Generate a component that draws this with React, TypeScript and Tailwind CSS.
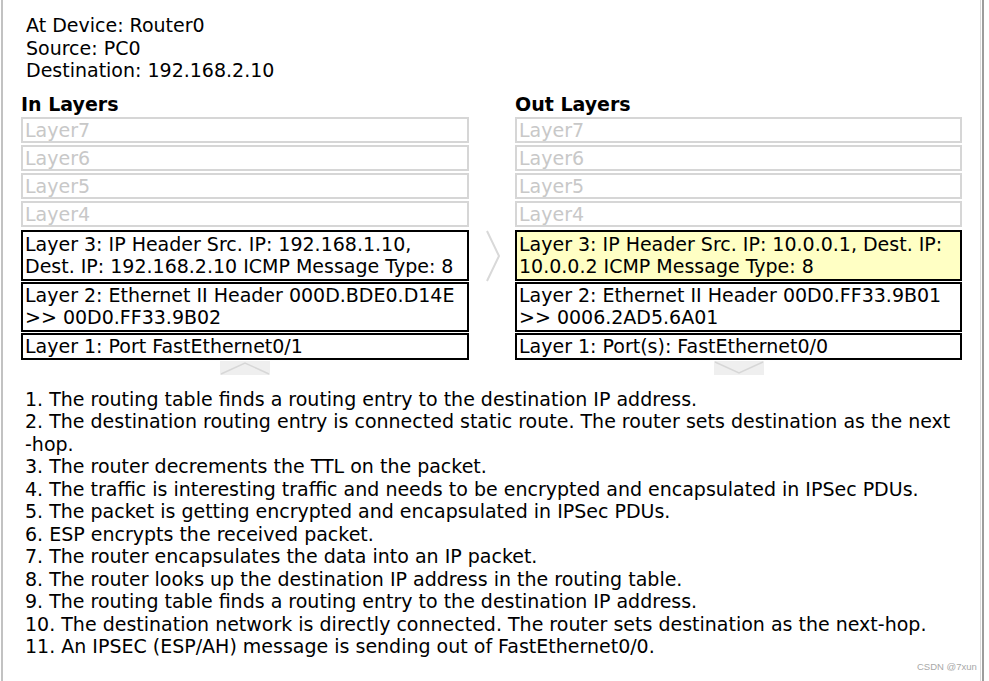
import React from 'react';

type Layer = { label: string };

const upperLayers: Layer[] = [
  { label: 'Layer7' },
  { label: 'Layer6' },
  { label: 'Layer5' },
  { label: 'Layer4' },
];

// each entry is one rendered line, the wrap of item 2 is kept as in the window
const steps = [
  '1. The routing table finds a routing entry to the destination IP address.',
  '2. The destination routing entry is connected static route. The router sets destination as the next',
  '-hop.',
  '3. The router decrements the TTL on the packet.',
  '4. The traffic is interesting traffic and needs to be encrypted and encapsulated in IPSec PDUs.',
  '5. The packet is getting encrypted and encapsulated in IPSec PDUs.',
  '6. ESP encrypts the received packet.',
  '7. The router encapsulates the data into an IP packet.',
  '8. The router looks up the destination IP address in the routing table.',
  '9. The routing table finds a routing entry to the destination IP address.',
  '10. The destination network is directly connected. The router sets destination as the next-hop.',
  '11. An IPSEC (ESP/AH) message is sending out of FastEthernet0/0.',
];

const GreyLayers = () => (
  <div className="mt-[2px] flex flex-col gap-[2px]">
    {upperLayers.map((l) => (
      <div
        key={l.label}
        className="h-[26px] border-2 border-[#d6d6d6] pl-[2px] leading-[22px] text-[#c8c8c8]"
      >
        {l.label}
      </div>
    ))}
  </div>
);

const TabUp = () => (
  <div className="mt-px h-[14px] w-[50px] self-center bg-[#efefef]">
    <svg width="50" height="14" viewBox="0 0 50 14">
      <polyline points="1,13 25,2 49,13" fill="none" stroke="#d7d7d7" strokeWidth="1.5" />
    </svg>
  </div>
);

const TabDown = () => (
  <div className="mt-px h-[14px] w-[50px] self-center bg-[#efefef]">
    <svg width="50" height="14" viewBox="0 0 50 14">
      <polyline points="1,1 25,12 49,1" fill="none" stroke="#d7d7d7" strokeWidth="1.5" />
    </svg>
  </div>
);

export default function App() {
  return (
    <div className="relative h-[681px] w-[989px] overflow-hidden bg-white font-['DejaVu_Sans',Verdana,sans-serif] text-[19px] text-black">
      <div className="ml-px h-full w-[983px] border-l-2 border-r-2 border-l-[#c2c2c2] border-r-[#9c9c9c]">
        <div className="mr-px h-full border-r border-[#d9d9d9] pl-[18px] pt-[14px]">
          {/* device info */}
          <div className="pl-[5px] leading-[22.5px]">
            <div>At Device: Router0</div>
            <div>Source: PC0</div>
            <div>Destination: 192.168.2.10</div>
          </div>

          <div className="mt-[11px] flex">
            {/* in layers */}
            <div className="flex w-[448px] flex-col">
              <div className="h-[22px] font-bold leading-[22px]">In Layers</div>
              <GreyLayers />
              <div className="mt-[3px] h-[51px] border-2 border-black pl-[2px] pt-px leading-[22px] whitespace-nowrap">
                <div>Layer 3: IP Header Src. IP: 192.168.1.10,</div>
                <div>Dest. IP: 192.168.2.10 ICMP Message Type: 8</div>
              </div>
              <div className="mt-px h-[50px] border-2 border-black pl-[2px] leading-[22.5px] whitespace-nowrap">
                <div>Layer 2: Ethernet II Header 000D.BDE0.D14E</div>
                <div>&gt;&gt; 00D0.FF33.9B02</div>
              </div>
              <div className="mt-px h-[27px] border-2 border-black pl-[2px] leading-[22px] whitespace-nowrap">
                Layer 1: Port FastEthernet0/1
              </div>
              <TabUp />
            </div>

            {/* arrow between columns */}
            <div className="w-[46px]">
              <svg className="ml-[16px] mt-[137px]" width="16" height="52" viewBox="0 0 16 52">
                <polyline points="2,1 14,26 2,51" fill="none" stroke="#d9d9d9" strokeWidth="2" />
              </svg>
            </div>

            {/* out layers */}
            <div className="flex w-[447px] flex-col">
              <div className="h-[22px] font-bold leading-[22px]">Out Layers</div>
              <GreyLayers />
              <div className="mt-[3px] h-[51px] border-2 border-black bg-[#ffffc4] pl-[2px] pt-px leading-[22px] whitespace-nowrap">
                <div>Layer 3: IP Header Src. IP: 10.0.0.1, Dest. IP:</div>
                <div>10.0.0.2 ICMP Message Type: 8</div>
              </div>
              <div className="mt-px h-[50px] border-2 border-black pl-[2px] leading-[22.5px] whitespace-nowrap">
                <div>Layer 2: Ethernet II Header 00D0.FF33.9B01</div>
                <div>&gt;&gt; 0006.2AD5.6A01</div>
              </div>
              <div className="mt-px h-[27px] border-2 border-black pl-[2px] leading-[22px] whitespace-nowrap">
                Layer 1: Port(s): FastEthernet0/0
              </div>
              <TabDown />
            </div>
          </div>

          {/* processing steps */}
          <div className="mt-[13px] pl-[4px] leading-[22.5px] whitespace-nowrap">
            {steps.map((s, i) => (
              <div key={i}>{s}</div>
            ))}
          </div>
        </div>
      </div>

      <div className="absolute left-[917px] top-[660px] font-['Liberation_Sans',Arial,sans-serif] text-[9.5px] text-[#a8a8a8]">
        CSDN @7xun
      </div>
    </div>
  );
}
